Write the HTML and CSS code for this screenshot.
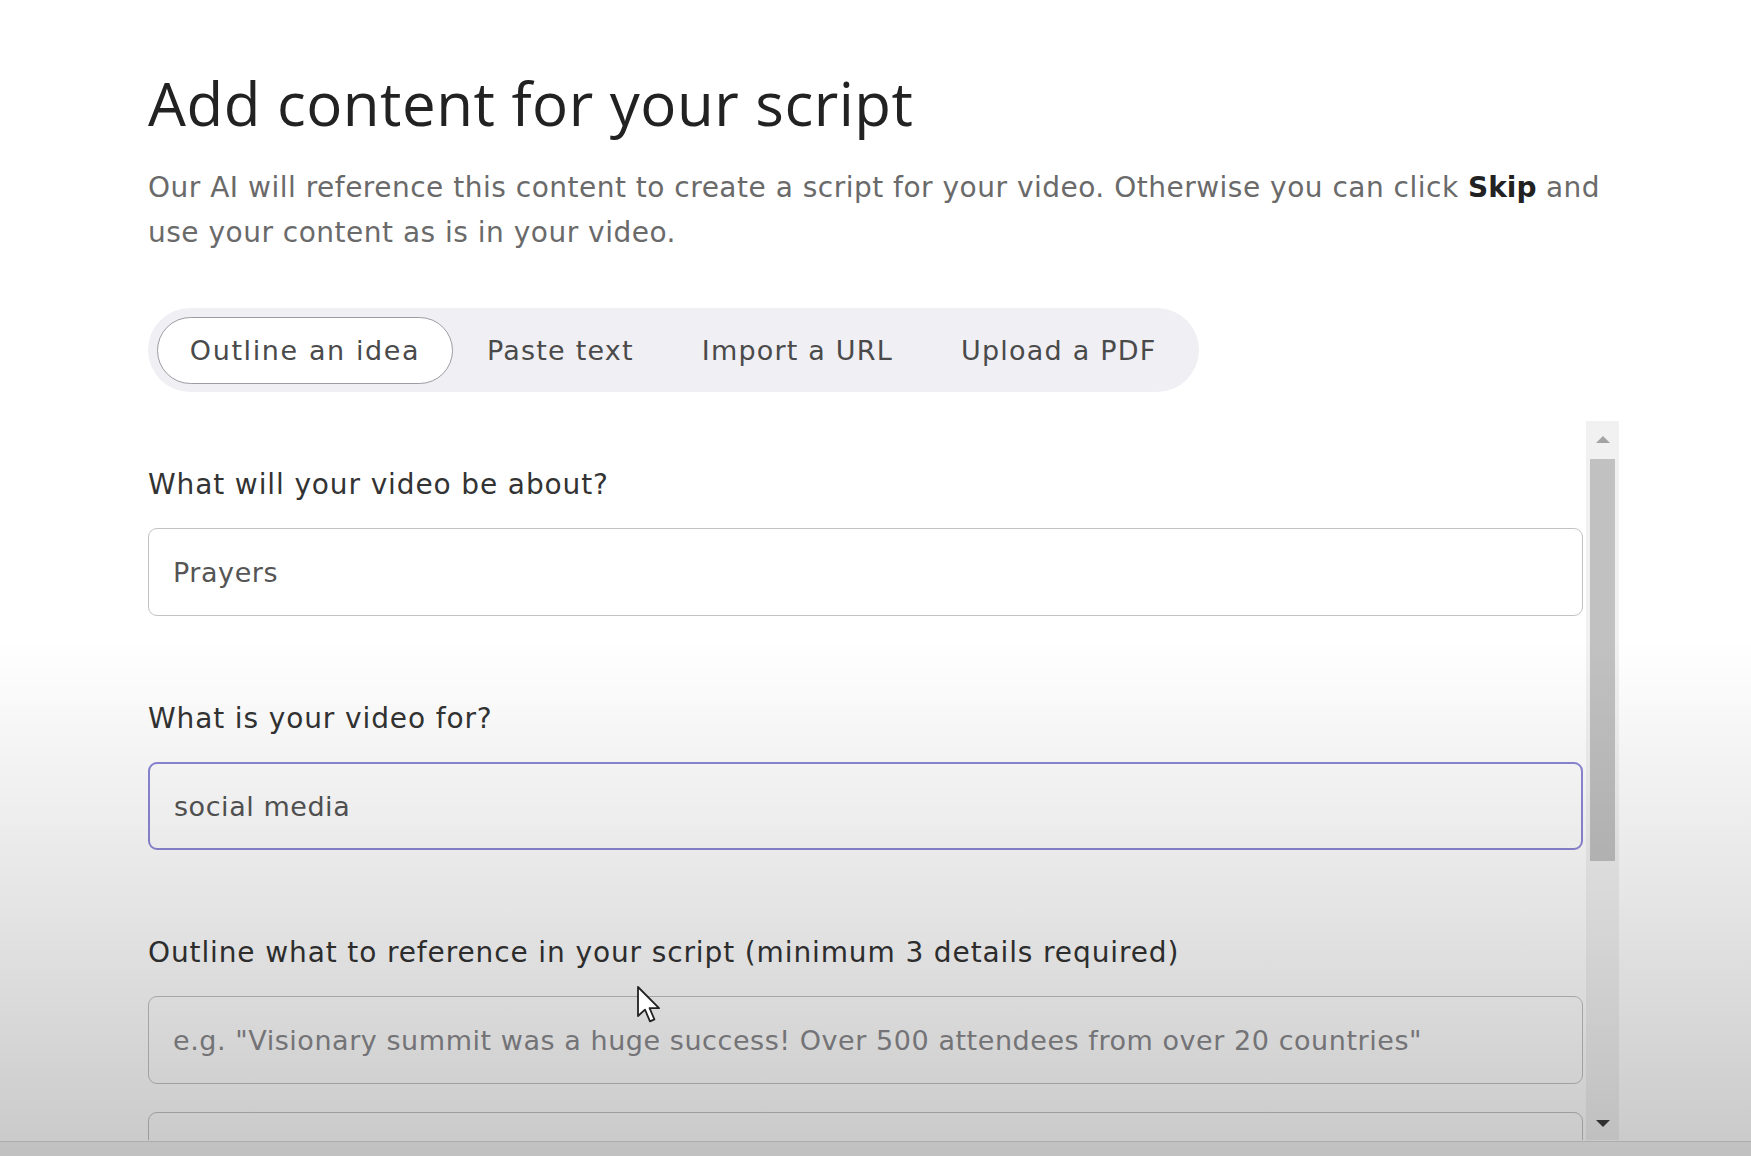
FILE: index.html
```html
<!DOCTYPE html>
<html lang="en">
<head>
<meta charset="utf-8">
<title>Add content for your script</title>
<link rel="stylesheet" href="styles.css">
</head>
<body>
<div class="page">
  <h1 class="title">Add content for your script</h1>
  <p class="lead"><span>Our AI will reference this content to create a script for your video. Otherwise you can click</span> <b>Skip</b> <span>and</span><br><span>use your content as is in your video.</span></p>
  <div class="tabs">
    <div class="tab active">Outline an idea</div>
    <div class="tab">Paste text</div>
    <div class="tab">Import a URL</div>
    <div class="tab">Upload a PDF</div>
  </div>
  <div class="panel">
    <div class="form">
      <div class="field">
        <div class="label">What will your video be about?</div>
        <div class="input">Prayers</div>
      </div>
      <div class="field">
        <div class="label">What is your video for?</div>
        <div class="input focused">social media</div>
      </div>
      <div class="field">
        <div class="label">Outline what to reference in your script (minimum 3 details required)</div>
        <div class="inputs">
          <div class="input placeholder">e.g. "Visionary summit was a huge success! Over 500 attendees from over 20 countries"</div>
          <div class="input"></div>
        </div>
      </div>
    </div>
    <div class="scrollbar">
      <div class="arrow up"></div>
      <div class="thumb"></div>
      <div class="track-rest"></div>
      <div class="arrow down"></div>
    </div>
  </div>
</div>
<div class="bottombar"></div>
<div class="shade"></div>
<svg class="cursor" width="26" height="40" viewBox="0 0 13 20">
  <path d="M1 1 L1 15.5 L4.5 12.3 L7 18.2 L9.2 17.2 L6.8 11.6 L11.5 11.6 Z" fill="#fff" stroke="#222" stroke-width="0.9" stroke-linejoin="round"/>
</svg>
</body>
</html>
```

FILE: styles.css
```css
* { box-sizing: border-box; }
html, body { margin: 0; padding: 0; }
body {
  width: 1751px;
  height: 1156px;
  overflow: hidden;
  background: #ffffff;
  font-family: "DejaVu Sans", "Open Sans", sans-serif;
  color: #333;
  position: relative;
}
.page {
  padding: 68px 0 0 148px;
  height: 1141px;
  overflow: hidden;
}
.title {
  margin: 0;
  font-family: "Open Sans", "DejaVu Sans", sans-serif;
  font-size: 60px;
  line-height: 70px;
  font-weight: 400;
  color: #222;
  letter-spacing: 0.5px;
}
.lead {
  margin: 27px 0 0;
  width: 1520px;
  font-size: 28px;
  line-height: 45px;
  letter-spacing: 0.5px;
  color: #6a6a6a;
  white-space: nowrap;
}
.lead b { color: #222; font-weight: 700; letter-spacing: 0; }
.tabs {
  margin-top: 53px;
  display: inline-flex;
  align-items: center;
  height: 84px;
  padding: 0 9px;
  border-radius: 42px;
  background: #efeff4;
}
.tab {
  flex: none;
  height: 67px;
  display: flex;
  align-items: center;
  padding: 0 34px;
  font-size: 27px;
  letter-spacing: 1.2px;
  color: #4a4a4a;
  white-space: nowrap;
}
.tab.active {
  background: #fff;
  border: 1.5px solid #9c9ca4;
  border-radius: 34px;
  padding: 0;
  width: 296px;
  letter-spacing: 1.6px;
  justify-content: center;
}
.panel {
  margin-top: 29px;
  display: flex;
  width: 1471px;
  height: 719px;
  overflow: hidden;
}
.form {
  flex: 1;
  padding-top: 44px;
  display: flex;
  flex-direction: column;
  gap: 83px;
}
.label {
  font-size: 28px;
  line-height: 40px;
  letter-spacing: 0.88px;
  color: #333;
  margin-bottom: 23px;
  white-space: nowrap;
}
.inputs { display: flex; flex-direction: column; gap: 28px; }
.input {
  height: 88px;
  flex: none;
  border: 1.5px solid #c3c3c6;
  border-radius: 9px;
  background: #fff;
  display: flex;
  align-items: center;
  padding-left: 24px;
  font-size: 27px;
  letter-spacing: 0.55px;
  color: #555;
  white-space: nowrap;
  overflow: hidden;
}
.input.focused { border: 2px solid #8d88d6; }
.input.placeholder { color: #8a8a8e; }
.scrollbar {
  width: 33px;
  margin-left: 3px;
  background: #f1f1f1;
  display: flex;
  flex-direction: column;
  align-items: center;
}
.arrow { height: 38px; width: 100%; flex: none; position: relative; }
.arrow.up::after, .arrow.down::after {
  content: "";
  position: absolute;
  left: 50%;
  transform: translateX(-50%);
  border-left: 7px solid transparent;
  border-right: 7px solid transparent;
}
.arrow.up::after { top: 15px; border-bottom: 7px solid #a3a3a3; }
.arrow.down::after { bottom: 13px; border-top: 7px solid #3c3c3c; }
.thumb { width: 25px; height: 402px; background: #c1c1c1; flex: none; }
.track-rest { flex: 1; }
.bottombar {
  height: 15px;
  background: #f4f4f4;
  border-top: 1px solid #d8d8d8;
}
.shade {
  position: absolute;
  inset: 0;
  pointer-events: none;
  background: linear-gradient(to bottom, rgba(0,0,0,0) 0px, rgba(0,0,0,0) 640px, rgba(0,0,0,0.1) 900px, rgba(0,0,0,0.21) 1156px);
}
.cursor {
  position: absolute;
  left: 636px;
  top: 985px;
}
```
